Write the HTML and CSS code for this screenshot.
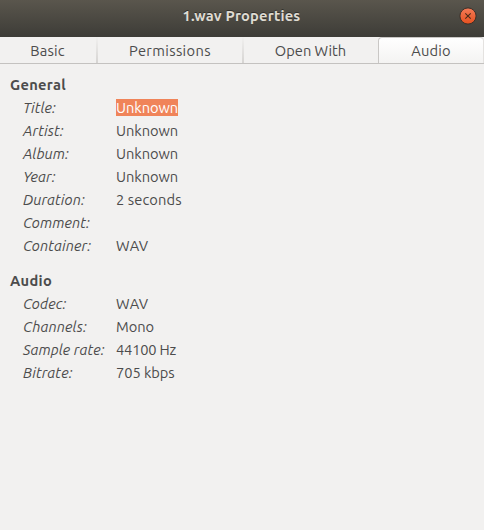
FILE: index.html
```
<!DOCTYPE html>
<html lang="en">
<head>
<meta charset="utf-8">
<title>1.wav Properties</title>
<link rel="stylesheet" href="styles.css">
</head>
<body>
<header class="titlebar">
  <h1 class="caption">1.wav Properties</h1>
  <button class="close" aria-label="Close"><svg width="18" height="18" viewBox="0 0 18 18"><defs><linearGradient id="orange" x1="0" y1="0" x2="0" y2="1"><stop offset="0" stop-color="#f47b57"/><stop offset="1" stop-color="#e5501f"/></linearGradient></defs><circle cx="9" cy="9" r="8.1" fill="url(#orange)" stroke="#3a3029" stroke-width="1"/><path d="M6.3 6.3l5.4 5.4M11.7 6.3l-5.4 5.4" stroke="#4b2b18" stroke-width="1.1"/></svg></button>
</header>
<nav class="tabs">
  <div class="tab basic"><span>Basic</span></div>
  <div class="tab permissions"><span>Permissions</span></div>
  <div class="tab open-with"><span>Open With</span></div>
  <div class="tab audio active"><span>Audio</span></div>
</nav>
<main>
  <section>
    <h2>General</h2>
    <dl>
      <dt>Title:</dt><dd><span class="selected">Unknown</span></dd>
      <dt>Artist:</dt><dd>Unknown</dd>
      <dt>Album:</dt><dd>Unknown</dd>
      <dt>Year:</dt><dd>Unknown</dd>
      <dt>Duration:</dt><dd class="loose">2 seconds</dd>
      <dt>Comment:</dt><dd></dd>
      <dt>Container:</dt><dd class="wide">WAV</dd>
    </dl>
  </section>
  <section>
    <h2>Audio</h2>
    <dl>
      <dt>Codec:</dt><dd class="wide">WAV</dd>
      <dt>Channels:</dt><dd>Mono</dd>
      <dt>Sample rate:</dt><dd class="tight">44100 Hz</dd>
      <dt>Bitrate:</dt><dd>705 kbps</dd>
    </dl>
  </section>
</main>
</body>
</html>
```
FILE: styles.css
```
* { box-sizing: border-box; }
body { margin: 0; height: 530px; overflow: hidden; background: #f2f1f0; color: #4c4c4c; font: 14.667px/23px "Ubuntu", "Noto Sans", sans-serif; white-space: nowrap; }
.titlebar { height: 37px; display: grid; grid-template-columns: 31px 1fr 32px; align-items: center; background: linear-gradient(#5a564d, #3d3c37); padding-bottom: 5px; }
.caption { grid-column: 2; margin: 0; text-align: center; font-size: 14.667px; line-height: 22px; font-weight: 700; letter-spacing: .2px; color: #dfdbd2; text-shadow: 0 -1px #302f2b; }
.close { width: 18px; height: 18px; padding: 0; border: 0; background: none; margin-left: 7px; }
.close svg { display: block; }
.tabs { height: 27px; display: flex; border-bottom: 1px solid #c4c2c0; background: #f2f1f0; }
.tab { height: 26px; line-height: 27px; text-align: center; border-right: 2px solid; border-image: linear-gradient(#f2f1f0, #d5d3d1) 1; }
.basic { width: 98px; padding-right: 1px; letter-spacing: .15px; }
.permissions { width: 146px; letter-spacing: .35px; }
.open-with { width: 134px; padding-right: 1px; border-right: 0; border-image: none; }
.active { width: 106px; border: 1px solid #c9c7c5; border-bottom: 0; border-right-color: #e4e2e0; border-image: none; border-radius: 4px 4px 0 0; background: linear-gradient(#fff, #f4f3f2); line-height: 25px; letter-spacing: .15px; }
main { padding: 9px 10px; }
section { margin-bottom: 12px; }
h2 { margin: 0; font-size: 14.667px; line-height: 23px; font-weight: 700; letter-spacing: .3px; }
dl { margin: 0; display: grid; grid-template-columns: 93px 1fr; grid-auto-rows: 23px; padding-left: 13px; }
dt { font-style: italic; letter-spacing: .1px; }
dd { margin: 0; letter-spacing: -.05px; }
.loose { letter-spacing: .1px; }
.wide { letter-spacing: .35px; }
.tight { letter-spacing: -.2px; }
.selected { display: block; width: 62px; height: 17px; margin-top: 3px; line-height: 17px; background: #f08459; color: #fff; }
```
